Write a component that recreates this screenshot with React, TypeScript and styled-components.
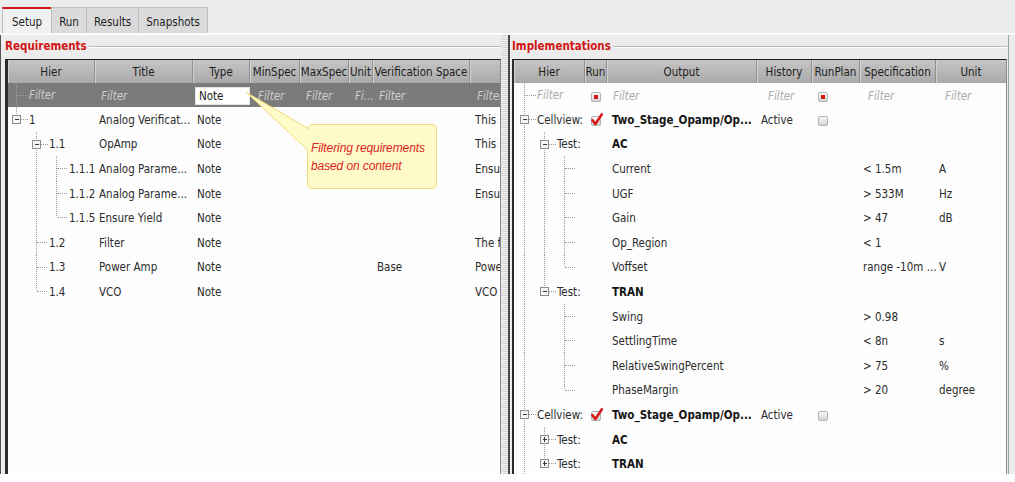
import React from "react";
import styled, { createGlobalStyle, css } from "styled-components";

const GlobalStyle = createGlobalStyle`
  html, body { margin: 0; padding: 0; background: #ffffff; }
  body {
    font-family: "DejaVu Sans Condensed", "DejaVu Sans", sans-serif;
    font-stretch: condensed;
    font-size: 11.5px;
    color: #2b2b2b;
  }
`;

type Kind = "none" | "pass" | "mid" | "last";
interface SlotSpec { k: Kind; e?: "minus" | "plus" }
type Box = "partial" | "checked" | "off";

const N: SlotSpec = { k: "none" };
const P: SlotSpec = { k: "pass" };
const M: SlotSpec = { k: "mid" };
const L: SlotSpec = { k: "last" };

const SLOT_W = 20;
const SLOT_CX = 8.5;
const ROW_H = 24.6;

const REQ_COLS = "87px 98px 57px 50px 49px 24px 97px 1fr";
const IMP_COLS = "71px 22px 150px 55px 48px 76px 1fr";

const reqRows = [
  { tree: [{ k: "last", e: "minus" } as SlotSpec], hier: "1", title: "Analog Verificat...", vs: "", desc: "This is the top" },
  { tree: [N, { k: "mid", e: "minus" } as SlotSpec], hier: "1.1", title: "OpAmp", vs: "", desc: "This block" },
  { tree: [N, P, M], hier: "1.1.1", title: "Analog Parame...", vs: "", desc: "Ensure the" },
  { tree: [N, P, M], hier: "1.1.2", title: "Analog Parame...", vs: "", desc: "Ensure the" },
  { tree: [N, P, L], hier: "1.1.5", title: "Ensure Yield", vs: "", desc: "" },
  { tree: [N, M], hier: "1.2", title: "Filter", vs: "", desc: "The filter" },
  { tree: [N, M], hier: "1.3", title: "Power Amp", vs: "Base", desc: "Power amp" },
  { tree: [N, L], hier: "1.4", title: "VCO", vs: "", desc: "VCO" },
];

interface ImpRow {
  tree: SlotSpec[];
  hier?: string;
  run?: Box;
  output: string;
  bold?: boolean;
  history?: string;
  runplan?: Box;
  spec?: string;
  unit?: string;
}

const impRows: ImpRow[] = [
  { tree: [{ k: "mid", e: "minus" }], hier: "Cellview:", run: "checked", output: "Two_Stage_Opamp/Op...", bold: true, history: "Active", runplan: "off" },
  { tree: [P, { k: "mid", e: "minus" }], hier: "Test:", output: "AC", bold: true },
  { tree: [P, P, M], output: "Current", spec: "< 1.5m", unit: "A" },
  { tree: [P, P, M], output: "UGF", spec: "> 533M", unit: "Hz" },
  { tree: [P, P, M], output: "Gain", spec: "> 47", unit: "dB" },
  { tree: [P, P, M], output: "Op_Region", spec: "< 1" },
  { tree: [P, P, L], output: "Voffset", spec: "range -10m ...", unit: "V" },
  { tree: [P, { k: "last", e: "minus" }], hier: "Test:", output: "TRAN", bold: true },
  { tree: [P, N, M], output: "Swing", spec: "> 0.98" },
  { tree: [P, N, M], output: "SettlingTime", spec: "< 8n", unit: "s" },
  { tree: [P, N, M], output: "RelativeSwingPercent", spec: "> 75", unit: "%" },
  { tree: [P, N, L], output: "PhaseMargin", spec: "> 20", unit: "degree" },
  { tree: [{ k: "mid", e: "minus" }], hier: "Cellview:", run: "checked", output: "Two_Stage_Opamp/Op...", bold: true, history: "Active", runplan: "off" },
  { tree: [P, { k: "mid", e: "plus" }], hier: "Test:", output: "AC", bold: true },
  { tree: [P, { k: "last", e: "plus" }], hier: "Test:", output: "TRAN", bold: true },
];

const TreeSlot: React.FC<{ spec: SlotSpec; h: number }> = ({ spec, h }) => {
  const cx = SLOT_CX;
  const cy = Math.round(h / 2) + 0.5;
  const dot = { stroke: "#9a9a9a", strokeWidth: 1, strokeDasharray: "1 1", shapeRendering: "crispEdges" as const };
  const hasBranch = spec.k === "mid" || spec.k === "last";
  return (
    <svg width={SLOT_W} height={h} viewBox={`0 0 ${SLOT_W} ${h}`} style={{ flex: "none" }}>
      {(spec.k === "pass" || spec.k === "mid") && <line x1={cx} x2={cx} y1={0} y2={h} {...dot} />}
      {spec.k === "last" && <line x1={cx} x2={cx} y1={0} y2={cy} {...dot} />}
      {hasBranch && <line x1={spec.e ? cx + 5 : cx} x2={SLOT_W} y1={cy} y2={cy} {...dot} />}
      {spec.e && (
        <g shapeRendering="crispEdges">
          <rect x={cx - 4} y={cy - 4} width={8} height={8} fill="#f4f4f4" stroke="#8d8d8d" />
          <line x1={cx - 2} x2={cx + 3} y1={cy} y2={cy} stroke="#3a3a3a" />
          {spec.e === "plus" && <line x1={cx} x2={cx} y1={cy - 2} y2={cy + 3} stroke="#3a3a3a" />}
        </g>
      )}
    </svg>
  );
};

const CheckBox: React.FC<{ state: Box }> = ({ state }) => (
  <svg width={13} height={14} viewBox="0 0 13 14">
    <defs>
      <linearGradient id="cbg" x1="0" y1="0" x2="0" y2="1">
        <stop offset="0" stopColor="#fbfbfb" />
        <stop offset="1" stopColor="#d0d0d0" />
      </linearGradient>
    </defs>
    <rect x={1.5} y={3.5} width={9} height={9} rx={1.5} fill="url(#cbg)" stroke="#b4b4b4" />
    {state === "partial" && <rect x={4} y={6} width={4} height={4} fill="#d81818" />}
    {state === "checked" && (
      <path d="M2.4 7.2 L5.4 11 L11.8 1.4" fill="none" stroke="#d81818" strokeWidth={2.6} strokeLinecap="round" strokeLinejoin="round" />
    )}
  </svg>
);

const App: React.FC = () => {
  return (
    <Window>
      <GlobalStyle />
      <TabBar>
        <Tab $active>Setup</Tab>
        <Tab>Run</Tab>
        <Tab>Results</Tab>
        <Tab>Snapshots</Tab>
      </TabBar>
      <Panes>
        <Section $w={500}>
          <Legend>Requirements</Legend>
          <TreeBox>
            <HeaderRow $cols={REQ_COLS}>
              <HeadCell>Hier</HeadCell>
              <HeadCell>Title</HeadCell>
              <HeadCell>Type</HeadCell>
              <HeadCell>MinSpec</HeadCell>
              <HeadCell>MaxSpec</HeadCell>
              <HeadCell>Unit</HeadCell>
              <HeadCell>Verification Space</HeadCell>
              <HeadCell $last />
            </HeaderRow>
            <FilterRow $cols={REQ_COLS} $dark>
              <HierCell $pad={0}>
                <TreeSlot spec={M} h={24} />
                <Hint $dark>Filter</Hint>
              </HierCell>
              <Cell $pad={5}><Hint $dark>Filter</Hint></Cell>
              <Cell $pad={2}><FilterInput>Note</FilterInput></Cell>
              <Cell $pad={7}><Hint $dark>Filter</Hint></Cell>
              <Cell $pad={5}><Hint $dark>Filter</Hint></Cell>
              <Cell $pad={5}><Hint $dark>Fi...</Hint></Cell>
              <Cell $pad={5}><Hint $dark>Filter</Hint></Cell>
              <Cell $pad={6}><Hint $dark>Filter</Hint></Cell>
            </FilterRow>
            {reqRows.map((r, i) => (
              <Row key={i} $cols={REQ_COLS}>
                <HierCell $pad={0}>
                  {r.tree.map((s, j) => <TreeSlot key={j} spec={s} h={ROW_H} />)}
                  <HierText>{r.hier}</HierText>
                </HierCell>
                <Cell $pad={4}>{r.title}</Cell>
                <Cell $pad={4}>Note</Cell>
                <Cell />
                <Cell />
                <Cell />
                <Cell $pad={4}>{r.vs}</Cell>
                <Cell $pad={5}>{r.desc}</Cell>
              </Row>
            ))}
            <Callout>
              <svg width={192} height={98} viewBox="0 0 192 98" style={{ position: "absolute", left: 0, top: 0 }}>
                <path
                  d="M67 32.5 H185 Q190.5 32.5 190.5 38 V91 Q190.5 96.5 185 96.5 H67 Q61.5 96.5 61.5 91 V58 L0.5 0.5 L61.5 36 V38 Q61.5 32.5 67 32.5 Z"
                  fill="#fefbc8"
                  stroke="#f0da78"
                />
              </svg>
              <CalloutText>
                Filtering requirements
                <br />
                based on content
              </CalloutText>
            </Callout>
          </TreeBox>
        </Section>
        <Splitter />
        <Section $w={499} $edge>
          <Legend>Implementations</Legend>
          <TreeBox $thin>
            <HeaderRow $cols={IMP_COLS}>
              <HeadCell>Hier</HeadCell>
              <HeadCell>Run</HeadCell>
              <HeadCell>Output</HeadCell>
              <HeadCell>History</HeadCell>
              <HeadCell>RunPlan</HeadCell>
              <HeadCell>Specification</HeadCell>
              <HeadCell $last>Unit</HeadCell>
            </HeaderRow>
            <FilterRow $cols={IMP_COLS}>
              <HierCell $pad={2}>
                <TreeSlot spec={M} h={24} />
                <Hint>Filter</Hint>
              </HierCell>
              <Cell $center><CheckBox state="partial" /></Cell>
              <Cell $pad={5}><Hint>Filter</Hint></Cell>
              <Cell $pad={10}><Hint>Filter</Hint></Cell>
              <Cell $pad={5}><CheckBox state="partial" /></Cell>
              <Cell $pad={7}><Hint>Filter</Hint></Cell>
              <Cell $pad={8}><Hint>Filter</Hint></Cell>
            </FilterRow>
            {impRows.map((r, i) => (
              <Row key={i} $cols={IMP_COLS}>
                <HierCell $pad={2}>
                  {r.tree.map((s, j) => <TreeSlot key={j} spec={s} h={ROW_H} />)}
                  <HierText>{r.hier}</HierText>
                </HierCell>
                <Cell $center>{r.run && <CheckBox state={r.run} />}</Cell>
                <Cell $pad={5} $bold={r.bold}>{r.output}</Cell>
                <Cell $pad={4}>{r.history}</Cell>
                <Cell $pad={5}>{r.runplan && <CheckBox state={r.runplan} />}</Cell>
                <Cell $pad={3}>{r.spec}</Cell>
                <Cell $pad={3}>{r.unit}</Cell>
              </Row>
            ))}
          </TreeBox>
        </Section>
      </Panes>
    </Window>
  );
};

const Window = styled.div`
  width: 1015px;
  height: 474px;
  background: #ececec;
  display: flex;
  flex-direction: column;
  overflow: hidden;
`;

const TabBar = styled.div`
  display: flex;
  align-items: flex-end;
  height: 26px;
  padding: 7px 0 0 2px;
  border-bottom: 2px solid #fbfbfb;
`;

const Tab = styled.div<{ $active?: boolean }>`
  height: 26px;
  box-sizing: border-box;
  padding: 2px 7px 0;
  margin-right: -1px;
  display: flex;
  align-items: center;
  color: #1e1e1e;
  background: #dadada;
  border: 1px solid #bcbcbc;
  border-bottom: none;
  ${(p) =>
    p.$active &&
    css`
      padding: 2px 9px 0;
      background: #f1f1f1;
      border-top: 2px solid #d11818;
    `}
`;

const Panes = styled.div`
  flex: 1;
  min-height: 0;
  width: 1007px;
  display: flex;
  border-left: 1px solid #555;
  border-right: 1px solid #a4a4a4;
`;

const Section = styled.section<{ $w: number; $edge?: boolean }>`
  width: ${(p) => p.$w}px;
  box-sizing: border-box;
  display: flex;
  flex-direction: column;
  padding-left: ${(p) => (p.$edge ? 2 : 4)}px;
  ${(p) => p.$edge && css`border-left: 2px solid #4a4a4a;`}
`;

const Splitter = styled.div`
  width: 7px;
  background: repeating-linear-gradient(0deg, #d6d6d6 0 1px, #f2f2f2 1px 2px);
`;

const Legend = styled.div`
  height: 24px;
  box-sizing: border-box;
  padding-bottom: 3px;
  display: flex;
  align-items: center;
  gap: 2px;
  font-weight: bold;
  color: #d11414;
  &::after {
    content: "";
    flex: 1;
    border-top: 1px solid #b9b9b9;
    border-bottom: 1px solid #fbfbfb;
    margin-top: 2px;
  }
`;

const TreeBox = styled.div<{ $thin?: boolean }>`
  flex: 1;
  min-height: 0;
  position: relative;
  overflow: hidden;
  background: #fdfdfd;
  border-top: 1px solid #1e1e1e;
  border-left: ${(p) => (p.$thin ? 2 : 3)}px solid #2a2a2a;
  border-right: 1px solid #8a8a8a;
`;

const Row = styled.div<{ $cols: string }>`
  display: grid;
  grid-template-columns: ${(p) => p.$cols};
  height: ${ROW_H}px;
`;

const HeaderRow = styled(Row)`
  height: 23px;
  background: linear-gradient(#c5c5c5, #a9a9a9);
  color: #1c1c1c;
`;

const FilterRow = styled(Row)<{ $dark?: boolean }>`
  height: 24px;
  background: ${(p) => (p.$dark ? "#7b7b7b" : "#fdfdfd")};
`;

const HeadCell = styled.div<{ $last?: boolean }>`
  display: flex;
  align-items: center;
  justify-content: center;
  white-space: nowrap;
  overflow: hidden;
  border-right: ${(p) => (p.$last ? "none" : "1px solid #8f8f8f")};
  box-shadow: inset 1px 0 #d2d2d2;
`;

const Cell = styled.div<{ $pad?: number; $bold?: boolean; $center?: boolean }>`
  display: flex;
  align-items: center;
  justify-content: ${(p) => (p.$center ? "center" : "flex-start")};
  padding-left: ${(p) => p.$pad ?? 0}px;
  padding-top: 1px;
  white-space: nowrap;
  overflow: hidden;
  font-weight: ${(p) => (p.$bold ? "bold" : "normal")};
  color: ${(p) => (p.$bold ? "#151515" : "#2b2b2b")};
`;

const HierCell = styled.div<{ $pad: number }>`
  display: flex;
  align-items: center;
  padding-left: ${(p) => p.$pad}px;
  white-space: nowrap;
  overflow: hidden;
`;

const HierText = styled.span`
  margin-left: 1px;
  padding-top: 1px;
`;

const Hint = styled.span<{ $dark?: boolean }>`
  font-style: italic;
  color: ${(p) => (p.$dark ? "#cdcdcd" : "#ababab")};
  margin-left: 1px;
`;

const FilterInput = styled.div`
  width: 55px;
  height: 18px;
  box-sizing: border-box;
  display: flex;
  align-items: center;
  padding-left: 3px;
  background: #ffffff;
  border: 1px solid #e4e4e4;
  color: #1e1e1e;
`;

const Callout = styled.div`
  position: absolute;
  left: 238px;
  top: 32px;
  width: 192px;
  height: 98px;
`;

const CalloutText = styled.div`
  position: relative;
  padding: 47px 0 0 65px;
  font-family: "Liberation Sans", Arial, sans-serif;
  font-stretch: normal;
  font-style: italic;
  font-size: 12px;
  line-height: 18px;
  color: #dd2424;
  letter-spacing: -0.1px;
`;

export default App;
